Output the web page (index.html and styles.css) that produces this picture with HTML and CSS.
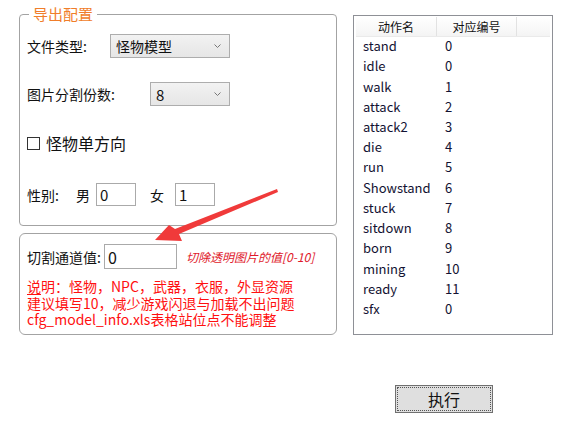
FILE: index.html
```html
<!DOCTYPE html>
<html>
<head>
<meta charset="utf-8">
<link rel="stylesheet" href="styles.css">
</head>
<body>
<div class="app">
  <div class="left">
    <fieldset class="group export">
      <legend>导出配置</legend>
      <div class="row row-type">
        <span class="lbl lbl-type">文件类型:</span>
        <div class="select sel-type"><span>怪物模型</span><svg class="chev" width="7" height="4" viewBox="0 0 7 4"><path d="M0.5 0.5 L3.5 3.5 L6.5 0.5" fill="none" stroke="#777" stroke-width="1"/></svg></div>
      </div>
      <div class="row row-split">
        <span class="lbl lbl-split">图片分割份数:</span>
        <div class="select sel-split"><span>8</span><svg class="chev" width="7" height="4" viewBox="0 0 7 4"><path d="M0.5 0.5 L3.5 3.5 L6.5 0.5" fill="none" stroke="#777" stroke-width="1"/></svg></div>
      </div>
      <div class="row row-check">
        <span class="checkbox"></span>
        <span class="check-lbl">怪物单方向</span>
      </div>
      <div class="row row-sex">
        <span class="lbl lbl-sex">性别:</span>
        <span class="lbl lbl-m">男</span>
        <div class="input in-sex"><span>0</span></div>
        <span class="lbl lbl-f">女</span>
        <div class="input in-sex"><span>1</span></div>
      </div>
    </fieldset>
    <div class="group cut">
      <div class="row row-cut">
        <span class="lbl lbl-cut">切割通道值:</span>
        <div class="input in-cut"><span>0</span></div>
        <span class="hint">切除透明图片的值[0-10]</span>
      </div>
      <div class="notes">
        <div class="note"><u>说</u>明：怪物，NPC，武器，衣服，外显资源</div>
        <div class="note">建议填写10，减少游戏闪退与加载不出问题</div>
        <div class="note">cfg_model_info.xls表格站位点不能调整</div>
      </div>
    </div>
  </div>
  <div class="right">
    <div class="list">
      <div class="list-head">
        <div class="hcell c1">动作名</div>
        <div class="hcell c2">对应编号</div>
        <div class="hcell c3"></div>
      </div>
      <div class="list-row"><span class="n">stand</span><span class="v">0</span></div>
      <div class="list-row"><span class="n">idle</span><span class="v">0</span></div>
      <div class="list-row"><span class="n">walk</span><span class="v">1</span></div>
      <div class="list-row"><span class="n">attack</span><span class="v">2</span></div>
      <div class="list-row"><span class="n">attack2</span><span class="v">3</span></div>
      <div class="list-row"><span class="n">die</span><span class="v">4</span></div>
      <div class="list-row"><span class="n">run</span><span class="v">5</span></div>
      <div class="list-row"><span class="n">Showstand</span><span class="v">6</span></div>
      <div class="list-row"><span class="n">stuck</span><span class="v">7</span></div>
      <div class="list-row"><span class="n">sitdown</span><span class="v">8</span></div>
      <div class="list-row"><span class="n">born</span><span class="v">9</span></div>
      <div class="list-row"><span class="n">mining</span><span class="v">10</span></div>
      <div class="list-row"><span class="n">ready</span><span class="v">11</span></div>
      <div class="list-row"><span class="n">sfx</span><span class="v">0</span></div>
    </div>
    <div class="btn-wrap">
      <div class="btn"><div class="btn-focus">执行</div></div>
    </div>
  </div>
</div>
<svg class="arrow" width="574" height="429" viewBox="0 0 574 429">
  <polygon points="155,240 169,225 175,229 277,189 278,192 179,234 182,241" fill="#f03a3a"/>
</svg>
</body>
</html>
```

FILE: styles.css
```css
html, body {
  margin: 0;
  padding: 0;
  background: #fff;
}
body {
  width: 574px;
  height: 429px;
  position: relative;
  overflow: hidden;
  font-family: "Noto Sans CJK SC", "Noto Sans", sans-serif;
  color: #111;
}
.app {
  display: flex;
  align-items: flex-start;
}
.left {
  margin-left: 19px;
  width: 318px;
  display: flex;
  flex-direction: column;
}
.group {
  box-sizing: border-box;
  border: 1px solid #a3a3a3;
  border-radius: 4px;
}
fieldset.export {
  margin: 0;
  padding: 0 0 19px 7px;
  margin-top: 5px;
  width: 318px;
  min-width: 0;
}
fieldset.export legend {
  margin-left: 2px;
  padding: 0 4px;
  font-size: 15px;
  line-height: 18px;
  height: 18px;
  color: #f07d2a;
}
.row {
  display: flex;
  align-items: center;
  font-size: 14px;
}
.lbl {
  line-height: 18px;
}
.row-type {
  margin-top: 11px;
  height: 24px;
}
.lbl-type { width: 83px; }
.row-split {
  margin-top: 24px;
  height: 24px;
}
.lbl-split { width: 123px; }
.select {
  box-sizing: border-box;
  height: 24px;
  border: 1px solid #adadad;
  background: linear-gradient(#f2f2f2, #e6e6e6);
  display: flex;
  align-items: center;
  justify-content: space-between;
  padding: 0 8px 0 5px;
  font-size: 14px;
}
.sel-type { width: 120px; }
.sel-split { width: 80px; padding-left: 5px; font-size: 15px; }
.chev { flex: none; }
.row-check {
  margin-top: 25px;
  height: 24px;
}
.checkbox {
  box-sizing: border-box;
  width: 13px;
  height: 13px;
  border: 1px solid #333;
  background: #fff;
  margin-right: 6px;
}
.check-lbl {
  font-size: 16px;
}
.row-sex {
  margin-top: 28px;
  height: 23px;
}
.lbl-sex { width: 49px; }
.lbl-m { width: 20px; }
.lbl-f { width: 25px; margin-left: 14px; }
.input {
  box-sizing: border-box;
  border: 1px solid #aaa;
  background: #fff;
  display: flex;
  align-items: center;
  padding-left: 3px;
  font-size: 15px;
}
.in-sex {
  width: 40px;
  height: 23px;
}
.cut {
  margin-top: 7px;
  height: 102px;
  border-radius: 6px;
  padding-left: 7px;
}
.row-cut {
  margin-top: 10px;
  height: 25px;
}
.lbl-cut { width: 77px; }
.in-cut {
  width: 73px;
  height: 25px;
  font-size: 16px;
}
.hint {
  margin-left: 9px;
  font-size: 12px;
  font-style: italic;
  color: #e0182a;
}
.notes {
  margin-top: 9px;
  font-size: 14px;
  color: #ff1010;
}
.note {
  height: 16.5px;
  line-height: 17px;
}
.notes u {
  text-underline-offset: 2px;
}
.right {
  margin-left: 16px;
  display: flex;
  flex-direction: column;
}
.list {
  box-sizing: border-box;
  margin-top: 15px;
  width: 200px;
  height: 320px;
  border: 1px solid #8e9096;
  padding: 1px 2px;
}
.list-head {
  display: flex;
  height: 20px;
  background: linear-gradient(#fff, #f4f4f4);
  border-bottom: 1px solid #eaeaea;
  box-sizing: border-box;
}
.hcell {
  box-sizing: border-box;
  font-size: 12px;
  line-height: 19px;
  text-align: center;
  border-right: 1px solid #e2e2e2;
}
.c1 { width: 81px; }
.c2 { width: 80px; }
.c3 { flex: 1; border-right: none; }
.list-row {
  display: flex;
  align-items: center;
  box-sizing: border-box;
  height: 20.23px;
  padding-bottom: 3px;
  font-size: 13px;
  color: #121232;
}
.n {
  width: 81px;
  padding-left: 7px;
  box-sizing: border-box;
}
.v {
  padding-left: 8px;
}
.btn-wrap {
  margin-top: 50px;
  margin-left: 42px;
}
.btn {
  box-sizing: border-box;
  width: 98px;
  height: 28px;
  border: 1px solid #707070;
  background: #dfdfdf;
  padding: 1px;
}
.btn-focus {
  box-sizing: border-box;
  height: 100%;
  border: 1px dotted #555;
  display: flex;
  align-items: center;
  justify-content: center;
  font-size: 16px;
  color: #111;
}
.arrow {
  position: absolute;
  left: 0;
  top: 0;
  pointer-events: none;
}
```
